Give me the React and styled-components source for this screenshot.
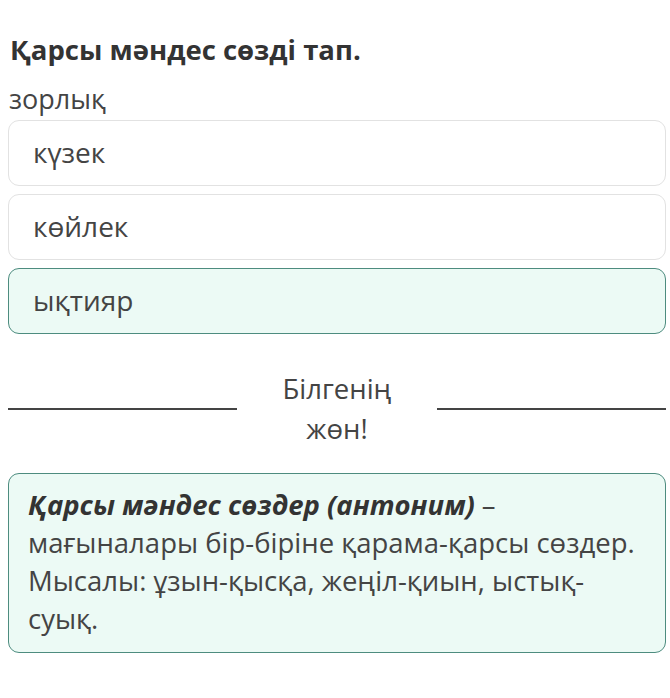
import React from "react";
import styled, { createGlobalStyle } from "styled-components";

const GlobalStyle = createGlobalStyle`
  html, body {
    margin: 0;
    padding: 0;
    background: #fff;
  }
  body {
    font-family: "Open Sans", "Noto Sans", sans-serif;
    color: #444;
  }
`;

const options = [
  { text: "күзек", correct: false },
  { text: "көйлек", correct: false },
  { text: "ықтияр", correct: true },
];

function App() {
  return (
    <>
      <GlobalStyle />
      <Page>
        <Title>Қарсы мәндес сөзді тап.</Title>
        <Word>зорлық</Word>
        <OptionList>
          {options.map((o) => (
            <Option key={o.text} correct={o.correct}>
              {o.text}
            </Option>
          ))}
        </OptionList>
        <Divider>
          <Line />
          <Praise>
            Білгенің
            <br />
            жөн!
          </Praise>
          <Line />
        </Divider>
        <Explain>
          <b>Қарсы мәндес сөздер (антоним)</b> – мағыналары бір-біріне
          қарама-қарсы сөздер. Мысалы: ұзын-қысқа, жеңіл-қиын, ыстық-суық.
        </Explain>
      </Page>
    </>
  );
}

const Page = styled.div`
  padding: 31px 4px 0 8px;
  width: 658px;
`;

const Title = styled.h1`
  margin: 0 0 0 2px;
  font-size: 27.5px;
  line-height: 38px;
  font-weight: 700;
  color: #333;
`;

const Word = styled.div`
  margin: 14px 0 0 1px;
  font-size: 27px;
  line-height: 32px;
  color: #444;
`;

const OptionList = styled.div`
  display: flex;
  flex-direction: column;
  gap: 8px;
  margin-top: 5px;
`;

const Option = styled.div`
  height: 66px;
  box-sizing: border-box;
  display: flex;
  align-items: center;
  padding: 0 24px 2px;
  border-radius: 11px;
  font-size: 28px;
  color: #444;
  border: 1px solid ${(p) => (p.correct ? "#4d8c7f" : "#e2e2e2")};
  background: ${(p) => (p.correct ? "#ecfaf5" : "#fff")};
`;

const Divider = styled.div`
  display: flex;
  align-items: center;
  justify-content: space-between;
  margin-top: 35px;
`;

const Line = styled.div`
  width: 229px;
  height: 2px;
  background: #444;
`;

const Praise = styled.div`
  font-size: 27.5px;
  line-height: 40px;
  text-align: center;
  color: #444;
`;

const Explain = styled.div`
  margin-top: 24px;
  box-sizing: border-box;
  min-height: 180px;
  padding: 12px 18px 14px 19px;
  border: 1px solid #4d8c7f;
  border-radius: 11px;
  background: #ecfaf5;
  font-size: 27.5px;
  line-height: 38px;
  color: #444;

  b {
    font-weight: 700;
    font-style: italic;
    color: #333;
  }
`;

export default App;
